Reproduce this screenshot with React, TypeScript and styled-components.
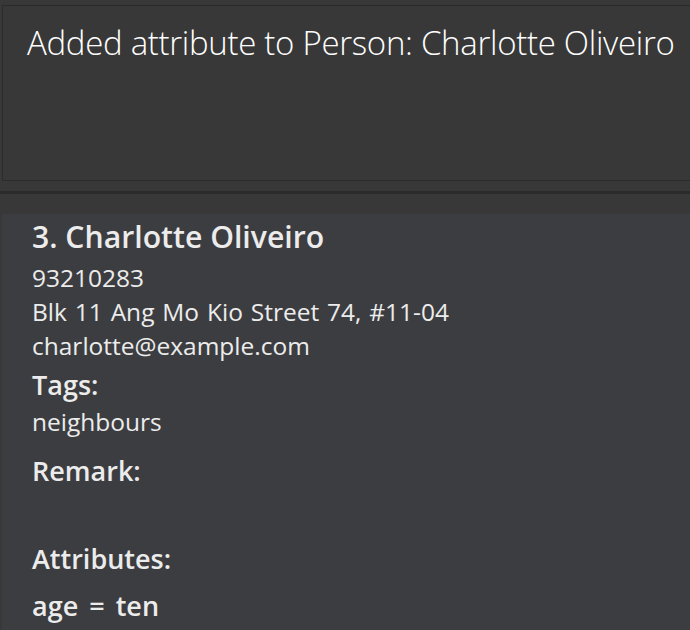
import React from "react";
import styled, { createGlobalStyle } from "styled-components";

const Global = createGlobalStyle`
  html, body {
    margin: 0;
    padding: 0;
    background: #383838;
    overflow: hidden;
  }
  #root {
    width: 690px;
    height: 630px;
    overflow: hidden;
  }
`;

const Page = styled.div`
  display: flex;
  flex-direction: column;
  width: 690px;
  height: 630px;
  background: #383838;
  padding-top: 5px;
  box-sizing: border-box;
`;

const ResultDisplay = styled.div`
  margin-left: 2px;
  width: 720px;
  height: 176px;
  box-sizing: border-box;
  border: 1px solid #2b2b2b;
  background: #383838;
  padding: 15px 0 0 24px;
  font-family: "Open Sans", "Noto Sans", sans-serif;
  font-weight: 300;
  font-size: 33px;
  letter-spacing: -0.3px;
  line-height: 44px;
  color: #ffffff;
  white-space: nowrap;
`;

const Divider = styled.div`
  margin-top: 10px;
  height: 3px;
  background: #2b2b2b;
`;

const ListArea = styled.div`
  flex: 1;
  padding-top: 20px;
  display: flex;
  flex-direction: column;
`;

const Card = styled.div`
  flex: 1;
  margin-left: 2px;
  background: #3c3d40;
  padding: 2.6px 0 0 30px;
  display: flex;
  flex-direction: column;
  font-family: "Open Sans", "Noto Sans", sans-serif;
  color: #ececec;
  white-space: nowrap;
`;

const Name = styled.div`
  font-size: 30.2px;
  font-weight: 600;
  line-height: 40px;
  margin-bottom: 4.2px;
`;

const Small = styled.div<{ $gapTop?: number }>`
  font-size: 24.5px;
  font-weight: 400;
  line-height: 34px;
  word-spacing: 1.5px;
  margin-top: ${(p) => p.$gapTop ?? 0}px;
`;

const Label = styled.div<{ $gapTop?: number; $wordGap?: number }>`
  font-size: 27px;
  font-weight: 600;
  line-height: 34px;
  word-spacing: ${(p) => p.$wordGap ?? 3}px;
  margin-top: ${(p) => p.$gapTop ?? 0}px;
`;

const EmptyValue = styled.div`
  height: 53.6px;
`;

export default function App() {
  return (
    <>
      <Global />
      <Page>
        <ResultDisplay>Added attribute to Person: Charlotte Oliveiro</ResultDisplay>
        <Divider />
        <ListArea>
          <Card>
            <Name>3. Charlotte Oliveiro</Name>
            <Small>93210283</Small>
            <Small>Blk 11 Ang Mo Kio Street 74, #11-04</Small>
            <Small>charlotte@example.com</Small>
            <Label $gapTop={5}>Tags:</Label>
            <Small $gapTop={3.5}>neighbours</Small>
            <Label $gapTop={14.9}>Remark:</Label>
            <EmptyValue />
            <Label>Attributes:</Label>
            <Label $gapTop={13.7} $wordGap={4}>age = ten</Label>
          </Card>
        </ListArea>
      </Page>
    </>
  );
}
